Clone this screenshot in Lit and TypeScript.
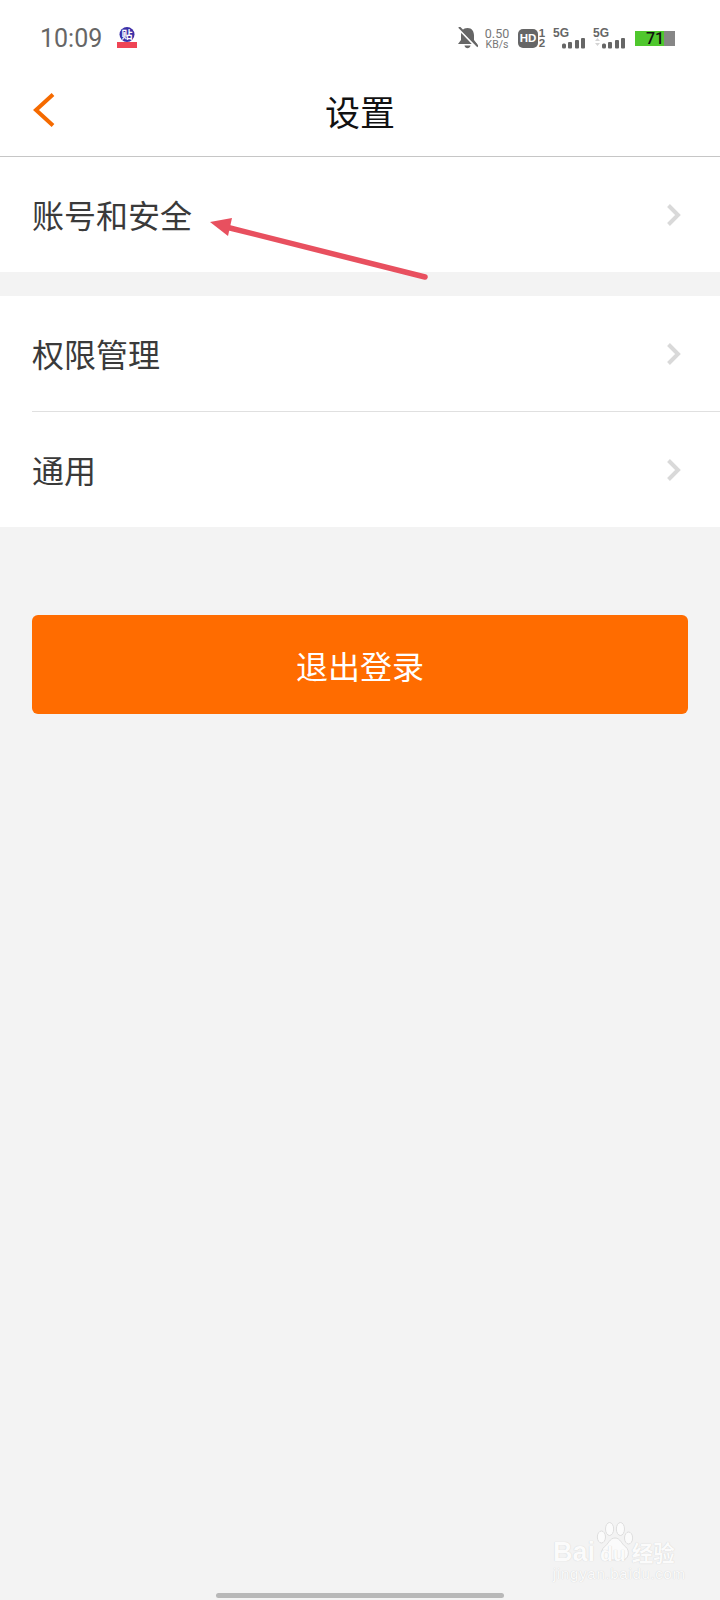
import {LitElement, css, html, svg} from 'lit';
import {customElement} from 'lit/decorators.js';

const chevron = html`<svg class="chevron" width="16" height="24" viewBox="0 0 16 24"><path d="M2.500 2.500 12 12l-9.500 9.500" fill="none" stroke="#d9d9d9" stroke-width="4"/></svg>`;

const signal = (dim: boolean) => html`
  <span class="net">
    <span class="net-label">5G</span>
    <svg width="33" height="13" viewBox="0 0 33 13">
      ${dim ? svg`<path d="M2 5 4.500 2 7 5zM2 7h5l-2.500 3z" fill="#d4d4d4"/>` : ''}
      <rect x="9" y="7.500" width="4" height="5" rx="1.500" fill="#666"/>
      <rect x="15" y="6" width="4" height="6.500" rx="1" fill="#666"/>
      <rect x="22" y="4" width="4" height="8.500" rx="1" fill="#666"/>
      <rect x="28" y="2" width="4" height="10.500" rx="1" fill="#666"/>
    </svg>
  </span>
`;

@customElement('app-root')
export class AppRoot extends LitElement {
  static styles = css`
    :host {
      display: block;
      font-family: 'Noto Sans CJK SC', 'Liberation Sans', sans-serif;
    }
    .page {
      position: relative;
      display: flex;
      flex-direction: column;
      height: 1600px;
      overflow: hidden;
      background: #f3f3f3;
    }
    .status {
      display: flex;
      align-items: center;
      height: 76px;
      padding: 0 45px 0 40px;
      background: #fff;
    }
    .time {
      font: 25px Roboto, sans-serif;
      color: #666;
    }
    .app-icon {
      margin-left: 15px;
    }
    .status-right {
      display: flex;
      align-items: center;
      margin-left: auto;
    }
    .bell {
      display: block;
    }
    .speed {
      display: flex;
      flex-direction: column;
      align-items: center;
      width: 26px;
      margin-left: 6px;
      font-family: Roboto, sans-serif;
      color: #777;
    }
    .speed b {
      font-size: 12.500px;
      line-height: 13px;
      font-weight: 400;
    }
    .speed i {
      font-size: 10.500px;
      line-height: 10px;
      font-style: normal;
    }
    .hd {
      display: flex;
      align-items: center;
      margin-left: 8px;
    }
    .hd-box {
      width: 20px;
      height: 19px;
      border-radius: 5px;
      background: #666;
      color: #fff;
      font: 700 11.500px/19px 'Liberation Sans', sans-serif;
      text-align: center;
    }
    .hd-nums {
      display: flex;
      flex-direction: column;
      width: 8px;
      font: 700 11.500px/10px 'Liberation Sans', sans-serif;
      color: #666;
      text-align: center;
    }
    .net {
      display: flex;
      flex-direction: column;
      width: 33px;
      margin-left: 7px;
    }
    .net-label {
      font: 700 12px/11px 'Liberation Sans', sans-serif;
      color: #666;
      margin-bottom: -3px;
    }
    .net svg {
      display: block;
    }
    .battery {
      display: flex;
      justify-content: center;
      width: 40px;
      height: 15px;
      margin-left: 9px;
      background: linear-gradient(90deg, #4fc72d 0 29px, #868686 29px);
      color: #111;
      font: 500 16px/15px Roboto, sans-serif;
    }
    .nav {
      position: relative;
      display: flex;
      align-items: center;
      justify-content: center;
      height: 70px;
      padding-bottom: 10px;
      background: #fff;
      border-bottom: 1px solid #c6c6c6;
    }
    .back {
      position: absolute;
      left: 32px;
      top: 17px;
    }
    .title {
      font-size: 35px;
      line-height: 44px;
      color: #111;
    }
    .group {
      background: #fff;
    }
    .group + .group {
      margin-top: 24px;
    }
    .row {
      display: flex;
      align-items: center;
      justify-content: space-between;
      height: 115px;
      margin-left: 32px;
      padding-right: 38px;
      font-size: 32px;
      color: #3a3a3a;
    }
    .row span {
      position: relative;
      top: -1px;
    }
    .row + .row {
      border-top: 1px solid #e0e0e0;
    }
    .logout {
      display: flex;
      align-items: center;
      justify-content: center;
      height: 99px;
      margin: 88px 32px 0;
      border-radius: 6px;
      background: #ff6c00;
      color: #fff;
      font-size: 32px;
    }
    .home-bar {
      position: absolute;
      left: 216px;
      bottom: 2px;
      width: 288px;
      height: 5px;
      border-radius: 3px;
      background: #b8b8b8;
    }
    .arrow {
      position: absolute;
      left: 200px;
      top: 205px;
    }
    .mark {
      position: absolute;
      left: 553px;
      top: 1522px;
      display: flex;
      flex-direction: column;
      width: 140px;
      color: #fbfbfb;
      text-shadow: 0 0 1px #c8c8c8;
      white-space: nowrap;
    }
    .paw {
      display: block;
      position: absolute;
      left: 43px;
      top: 0;
    }
    .mark-main {
      display: flex;
      align-items: baseline;
      height: 44px;
      font: 700 27px/60px 'Liberation Sans', sans-serif;
    }
    .mark-du {
      position: relative;
      margin-left: 5px;
      font-size: 21px;
    }
    .mark-main em {
      margin-left: 6px;
      font: 700 21.500px/60px 'Noto Sans CJK SC', sans-serif;
    }
    .mark-sub {
      font: 15px/16px 'Liberation Sans', sans-serif;
      letter-spacing: 0.7px;
    }
  `;

  render() {
    return html`
      <div class="page">
        <div class="status">
          <span class="time">10:09</span>
          <svg class="app-icon" width="20" height="24" viewBox="0 0 20 24">
            <circle cx="10" cy="8.500" r="7.500" fill="#3b2fa8"/>
            <text x="10" y="13" text-anchor="middle" font-size="11" font-weight="700" fill="#fff" font-family="Noto Sans CJK SC, sans-serif">贴</text>
            <path d="M0 16h20v6H0z" fill="#ef4455"/>
          </svg>
          <div class="status-right">
            <svg class="bell" width="21" height="22" viewBox="0 0 21 22">
              <path d="M10.500 1C6 1 4 4.500 4 8.500V13l-3 4h19l-3-4V8.500C17 4.500 15 1 10.500 1zM7.500 18.500h6c-.5 3.500-5.500 3.500-6 0z" fill="#666"/>
              <path d="M2 2 20 21" stroke="#fff" stroke-width="2"/>
              <path d="M2 0 21 19.500" stroke="#666" stroke-width="2"/>
            </svg>
            <span class="speed"><b>0.50</b><i>KB/s</i></span>
            <span class="hd">
              <span class="hd-box">HD</span>
              <span class="hd-nums"><span>1</span><span>2</span></span>
            </span>
            ${signal(false)}
            ${signal(true)}
            <span class="battery">71</span>
          </div>
        </div>

        <div class="nav">
          <svg class="back" width="24" height="34" viewBox="0 0 24 34">
            <path d="M21 1.500 4 17l17 15.500" fill="none" stroke="#f56a00" stroke-width="4"/>
          </svg>
          <span class="title">设置</span>
        </div>

        <div class="group">
          <div class="row"><span>账号和安全</span>${chevron}</div>
        </div>
        <div class="group">
          <div class="row"><span>权限管理</span>${chevron}</div>
          <div class="row"><span>通用</span>${chevron}</div>
        </div>

        <div class="logout">退出登录</div>

        <svg class="arrow" width="240" height="80" viewBox="0 0 240 80">
          <path d="M26 22 225 72" stroke="#e8505f" stroke-width="5.500" stroke-linecap="round"/>
          <path d="M10 17 32 13 28 31z" fill="#e8505f"/>
        </svg>

        <div class="mark">
          <svg class="paw" width="38" height="42" viewBox="0 0 42 42" preserveAspectRatio="none">
            <g fill="#fbfbfb" stroke="#dcdcdc" stroke-width="1">
              <ellipse cx="6" cy="15" rx="4.500" ry="6"/>
              <ellipse cx="15" cy="7" rx="4.500" ry="6.500"/>
              <ellipse cx="27" cy="7" rx="4.500" ry="6.500"/>
              <ellipse cx="36" cy="16" rx="4.500" ry="6"/>
              <path d="M21 16c-6 0-7 6-12 9-5 4-3 13 4 13h16c7 0 9-9 4-13-5-3-6-9-12-9z"/>
            </g>
          </svg>
          <div class="mark-main">Bai<span class="mark-du">du</span><em>经验</em></div>
          <div class="mark-sub">jingyan.baidu.com</div>
        </div>

        <div class="home-bar"></div>
      </div>
    `;
  }
}
